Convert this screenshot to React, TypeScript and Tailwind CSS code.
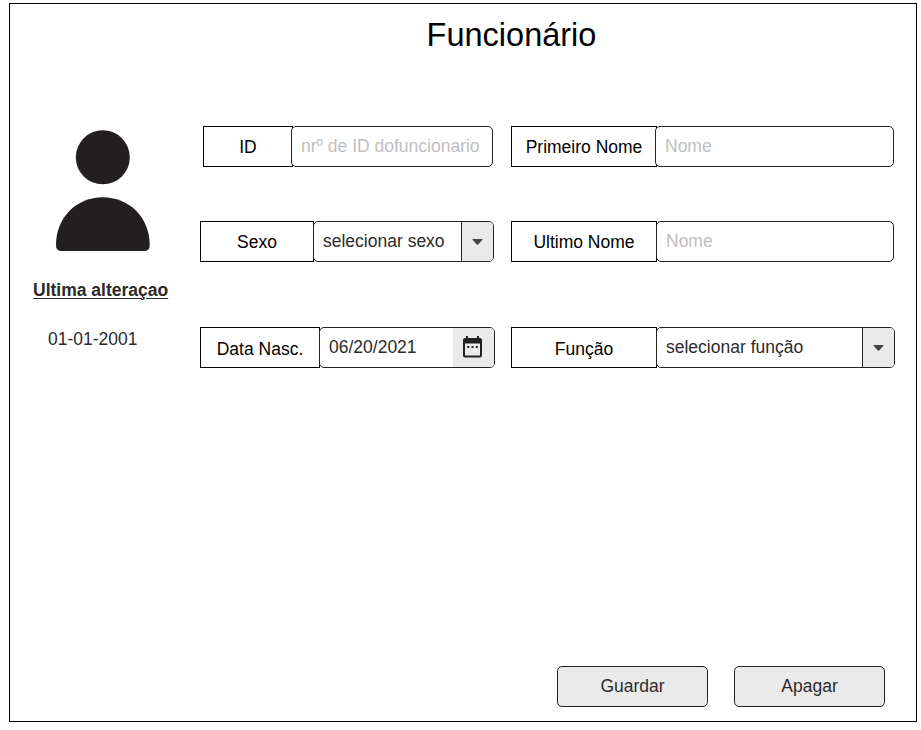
import type { ReactNode } from "react";

function Label({ className, children }: { className: string; children: ReactNode }) {
  return (
    <div className={`flex h-[41px] shrink-0 items-center justify-center border border-black text-black ${className}`}>
      {children}
    </div>
  );
}

function Box({ className, children }: { className: string; children: ReactNode }) {
  return (
    <div className={`flex h-[41px] shrink-0 items-stretch overflow-hidden rounded-[5px] border border-[#222] bg-white ${className}`}>
      {children}
    </div>
  );
}

function Value({ muted, children }: { muted?: boolean; children: ReactNode }) {
  return (
    <span className={`flex flex-1 items-center whitespace-nowrap pb-px pl-[9px] ${muted ? "text-[#c0c0c0]" : "text-[#2b2b2b]"}`}>
      {children}
    </span>
  );
}

function Arrow() {
  return (
    <span className="flex w-8 shrink-0 items-center justify-center border-l border-[#222] bg-[#eaeaea]">
      <svg width="11" height="6" viewBox="0 0 11 6" fill="#444">
        <path d="M1 0h9q1 0 .4.8L6.2 5.5q-.7.7-1.4 0L.6.8Q0 0 1 0Z" />
      </svg>
    </span>
  );
}

function Calendar() {
  return (
    <span className="flex w-[41px] shrink-0 items-center bg-[#eaeaea] pb-px pl-[10px]">
      <svg width="19" height="22" viewBox="0 0 19 22" fill="#222">
        <path
          fillRule="evenodd"
          d="M3 0h2v2h9V0h2v2h1q2 0 2 2v15.500q0 2-2 2H2q-2 0-2-2V4q0-2 2-2h1ZM2 7.500v12h15v-12Z"
        />
        <path d="M4.200 10h2v2h-2zM8.500 10h2v2h-2zM12.800 10h2v2h-2z" />
      </svg>
    </span>
  );
}

function Button({ children }: { children: ReactNode }) {
  return (
    <button className="h-[41px] w-[151px] rounded-[5px] border border-[#222] bg-[#eaeaea] pb-px text-[#2b2b2b]">
      {children}
    </button>
  );
}

export default function App() {
  return (
    <div className="h-[730px] w-[921px] bg-white pl-[9px] pt-[3px] font-['Liberation_Sans',Arial,sans-serif] text-[17.5px] leading-5">
      <main className="flex h-[719px] w-[908px] flex-col border border-black">
        <h1 className="pl-[97px] pt-[11px] text-center text-[32.5px] leading-10 text-black">Funcionário</h1>
        <div className="mt-[71px] flex">
          <aside className="w-[190px] shrink-0 text-[#2b2b2b]">
            <svg className="ml-[45px] mt-[3px]" width="96" height="123" viewBox="0 0 96 123" fill="#231f20">
              <circle cx="47.800" cy="28.300" r="27" />
              <path d="M1 116C1 88 22 68.300 47.800 68.300S94.700 88 94.700 116Q94.700 122 89 122H6.500Q1 122 1 116Z" />
            </svg>
            <p className="ml-[23px] mt-[28px] font-bold underline decoration-1 underline-offset-2">Ultima alteraçao</p>
            <p className="ml-[38px] mt-[29px]">01-01-2001</p>
          </aside>
          <section className="flex w-[311px] shrink-0 flex-col">
            <div className="ml-[3px] flex">
              <Label className="w-[90px] pt-px">ID</Label>
              <Box className="-ml-[2px] w-[202px]"><Value muted>nrº de ID dofuncionario</Value></Box>
            </div>
            <div className="mt-[54px] flex">
              <Label className="w-[114px] pt-px">Sexo</Label>
              <Box className="-ml-px w-[181px]"><Value>selecionar sexo</Value><Arrow /></Box>
            </div>
            <div className="mt-[65px] flex">
              <Label className="w-[120px] pt-[3px]">Data Nasc.</Label>
              <Box className="-ml-px w-[176px]"><Value>06/20/2021</Value><Calendar /></Box>
            </div>
          </section>
          <section className="flex flex-col">
            <div className="flex">
              <Label className="w-[146px] pt-px">Primeiro Nome</Label>
              <Box className="-ml-[2px] w-[239px]"><Value muted>Nome</Value></Box>
            </div>
            <div className="mt-[54px] flex">
              <Label className="w-[146px] pt-px">Ultimo Nome</Label>
              <Box className="-ml-px w-[238px]"><Value muted>Nome</Value></Box>
            </div>
            <div className="mt-[65px] flex">
              <Label className="w-[146px] pt-[3px]">Função</Label>
              <Box className="-ml-px w-[239px]"><Value>selecionar função</Value><Arrow /></Box>
            </div>
          </section>
        </div>
        <footer className="mb-[14px] mr-[31px] mt-auto flex justify-end gap-[26px]">
          <Button>Guardar</Button>
          <Button>Apagar</Button>
        </footer>
      </main>
    </div>
  );
}
